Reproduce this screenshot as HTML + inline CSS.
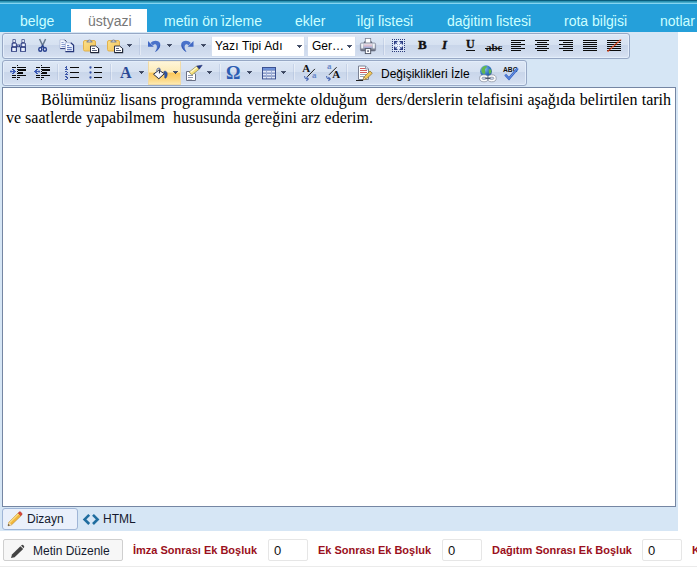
<!DOCTYPE html>
<html><head><meta charset="utf-8">
<style>
html,body{margin:0;padding:0;}
body{width:697px;height:568px;overflow:hidden;background:#fff;position:relative;font-family:"Liberation Sans",sans-serif;}
.abs{position:absolute;}
#top1{left:0;top:0;width:697px;height:1px;background:#095d7d;}
#top2{left:0;top:1px;width:697px;height:2px;background:linear-gradient(#2a93b4 50%,#48abca 50%);}
#top3{left:0;top:3px;width:697px;height:1px;background:#84d5f1;}
#tabs{left:0;top:4px;width:697px;height:28px;background:#25a0da;}
.cd{display:inline-block;width:0;position:relative;left:-3.5px;top:-0.8px;}
.tab{position:absolute;top:10px;height:23px;line-height:23px;font-size:14px;color:#ccffff;white-space:nowrap;}
#tabsel{left:71px;top:9px;width:76px;height:23px;background:#fff;}
#edwrap{left:0;top:32px;width:678px;height:499px;background:#d6e6f5;}
.tg{position:absolute;border:1px solid #97a8c5;border-radius:3px;background:linear-gradient(#dde7f5 0,#d6e1f1 44%,#c9d6ea 48%,#d2ddef 85%,#dae4f3 100%);box-sizing:border-box;box-shadow:inset 0 0 0 1px #e4eefb;}
.sep{position:absolute;width:1px;height:16px;background:rgba(150,168,205,.28);box-shadow:1px 0 0 rgba(255,255,255,.4);}
.dd{position:absolute;width:5px;height:1px;background:#4a556e;}
.dd::before{content:'';position:absolute;left:1px;top:1px;width:3px;height:1px;background:#3a455e;}
.dd::after{content:'';position:absolute;left:2px;top:2px;width:1px;height:1px;background:#3a455e;}
.ic{position:absolute;overflow:visible;}
.tx{position:absolute;font-size:12px;line-height:14px;color:#000;white-space:nowrap;}
#editor{left:2px;top:87px;width:674px;height:420px;box-sizing:border-box;border:1px solid #7586a3;background:#fff;}
#edtext{position:absolute;left:3px;top:3px;width:665px;font-family:"Liberation Serif",serif;font-size:16px;line-height:18px;color:#000;text-align:justify;}
.lbl{position:absolute;top:544px;font-size:11px;font-weight:bold;color:#9a1020;line-height:13px;white-space:nowrap;}
.inp{position:absolute;top:539px;width:40px;height:22px;box-sizing:border-box;border:1px solid #e6e6e6;border-radius:2px;background:#fff;font-size:13px;line-height:22px;padding-left:5px;color:#111;}
</style></head><body>
<div class="abs" id="top1"></div><div class="abs" id="top2"></div><div class="abs" id="top3"></div>
<div class="abs" id="tabs"></div>
<div class="abs" id="tabsel"></div>
<div class="tab" style="left:20px">belge</div>
<div class="tab" style="left:88px;color:#777">üstyazi</div>
<div class="tab" style="left:164px">meti<span class="cd">&#775;</span>n ön i<span class="cd">&#775;</span>zleme</div>
<div class="tab" style="left:295px">ekler</div>
<div class="tab" style="left:357px">i<span class="cd">&#775;</span>lgi<span class="cd">&#775;</span> li<span class="cd">&#775;</span>stesi<span class="cd">&#775;</span></div>
<div class="tab" style="left:447px">dağitim li<span class="cd">&#775;</span>stesi<span class="cd">&#775;</span></div>
<div class="tab" style="left:564px">rota bi<span class="cd">&#775;</span>lgi<span class="cd">&#775;</span>si<span class="cd">&#775;</span></div>
<div class="tab" style="left:660px">notlar</div>
<div class="abs" id="edwrap"></div>
<div class="tg" style="left:2px;top:33px;width:628px;height:26px;"></div>
<div class="tg" style="left:2px;top:60px;width:525px;height:26px;"></div>
<!--ROW1S-->
<!-- binoculars -->
<svg class="ic" style="left:11px;top:39px" width="16" height="13">
<defs><linearGradient id="bng" x1="0" y1="0" x2="1" y2="0"><stop offset="0" stop-color="#8ea0d8"/><stop offset=".45" stop-color="#ffffff"/><stop offset="1" stop-color="#b9c6ea"/></linearGradient>
<g id="bar"><path d="M1.6,0.2 H4.6 V3.4 L5.8,4.6 V8 L6,8.4 V12.8 H0 V8.4 L0.6,7.6 V4.6 L1.6,3.4 Z" fill="#27367a"/><rect x="2.3" y="0.9" width="1.6" height="2.3" fill="#f4f7ff"/><rect x="1.5" y="4.6" width="3.5" height="2.6" fill="url(#bng)"/><rect x="0.9" y="8.8" width="4.2" height="3.2" fill="url(#bng)"/></g></defs>
<use href="#bar"/><use href="#bar" x="9"/><rect x="5.6" y="5.6" width="3.6" height="2.6" fill="#27367a"/><rect x="6.4" y="6.2" width="1.8" height="1.2" fill="#aab8e2"/>
</svg>
<!-- scissors -->
<svg class="ic" style="left:38px;top:39px" width="10" height="13">
<path d="M1.6,0 L5.6,8.6 M7.6,0 L3.6,8.6" stroke="#67798e" stroke-width="1.5" fill="none"/>
<ellipse cx="2.3" cy="10.4" rx="1.5" ry="1.8" fill="#f4f6ff" stroke="#27408f" stroke-width="1.5"/>
<ellipse cx="6.9" cy="10.4" rx="1.5" ry="1.8" fill="#f4f6ff" stroke="#27408f" stroke-width="1.5"/>
<path d="M3.2,8.8 L4.6,6.6 L6,8.8" stroke="#27408f" stroke-width="1.4" fill="none"/>
</svg>
<!-- copy -->
<svg class="ic" style="left:59px;top:39px" width="16" height="14">
<defs><linearGradient id="cpg" x1="0" y1="0" x2="1" y2="0"><stop offset="0" stop-color="#ffffff"/><stop offset="1" stop-color="#dfe8fb"/></linearGradient></defs>
<path d="M1,0.8 H5.6 L7.4,2.6 V9.4 H1 Z" fill="url(#cpg)" stroke="#9aa7cf" stroke-width=".6"/>
<path d="M1.2,9.6 H7.4" stroke="#2a3a7c" stroke-width="1"/>
<path d="M5.6,0.8 L7.4,2.6" stroke="#2a3050" stroke-width="1"/>
<g fill="#7f93c9"><rect x="2.4" y="3" width="2.2" height=".9"/><rect x="2.4" y="5" width="4" height=".9"/><rect x="2.4" y="7" width="4" height=".9"/></g>
<path d="M6.4,3.8 H11.8 L14.4,6.2 V12.6 H6.4 Z" fill="url(#cpg)" stroke="#8f9dc8" stroke-width=".6"/>
<path d="M6.4,12.7 H14.6 V6.2 L11.8,3.8" stroke="#27377a" stroke-width="1.2" fill="none"/>
<g fill="#4a65b4"><rect x="8" y="6.2" width="2.2" height=".9"/><rect x="8" y="8.2" width="4.8" height=".9"/><rect x="8" y="10.2" width="4.8" height="1"/></g>
</svg>
<!-- paste -->
<svg class="ic" style="left:83px;top:39px" width="16" height="14">
<defs><linearGradient id="pgd" x1="0" y1="0" x2="1" y2="1"><stop offset="0" stop-color="#fbe08a"/><stop offset="1" stop-color="#f3c45a"/></linearGradient><g id="pst"><rect x="0.5" y="1.5" width="12" height="10.5" rx="1.5" fill="url(#pgd)" stroke="#e2b24e"/><path d="M3.6,3.6 V2.4 Q6.5,-1.6 9.4,2.4 V3.6 Z" fill="#858993"/><path d="M5.2,2.6 Q6.5,0.6 7.8,2.6 Z" fill="#f4f5f8"/><path d="M7.5,7 H12.6 L15.5,9.4 V13.5 H7.5 Z" fill="#fff" stroke="#2f3547" stroke-width="1"/><path d="M7.5,13.6 H15.6 V9.4" stroke="#1f2536" stroke-width="1.2" fill="none"/><rect x="9" y="9" width="3" height="1" fill="#59627c"/><rect x="9" y="11" width="5" height="1" fill="#59627c"/></g></defs>
<use href="#pst"/>
</svg>
<svg class="ic" style="left:107px;top:39px" width="16" height="14"><use href="#pst"/></svg>
<div class="dd" style="left:127px;top:44px"></div>
<div class="sep" style="left:139px;top:38px;height:17px"></div>
<!-- undo -->
<svg class="ic" style="left:147px;top:40px" width="14" height="12">
<defs><g id="undo"><path d="M1,1 L1,6.8 L6.8,6.8 Z" fill="#4169c4"/><path d="M3.6,3 C6,0.2 11,-0.3 13,3 C14.2,6 12,10 8,12 C10,9 10.4,6.6 9.4,5 C8.6,3.8 7,4.2 6,5.4 Z" fill="#4a72ca"/><path d="M12.4,4 C13.6,6.6 11.6,10 8,12 C10.4,10 12,7 12.4,4 Z" fill="#3558b0"/></g></defs>
<use href="#undo"/>
</svg>
<div class="dd" style="left:167px;top:44px"></div>
<svg class="ic" style="left:181px;top:40px" width="14" height="12"><use href="#undo" transform="translate(13.5,0) scale(-1,1)"/></svg>
<div class="dd" style="left:201px;top:44px"></div>
<!-- dropdowns -->
<div class="abs" style="left:211px;top:36px;width:94px;height:21px;background:#fff;box-sizing:border-box;border:1px solid #d3deef;border-top-color:#e4ebf6;"></div>
<div class="tx" style="left:215px;top:39px;letter-spacing:.14px">Yazı Tipi Adı</div>
<div class="dd" style="left:297px;top:45px"></div>
<div class="abs" style="left:307px;top:36px;width:49px;height:21px;background:#fff;box-sizing:border-box;border:1px solid #d3deef;border-top-color:#e4ebf6;"></div>
<div class="tx" style="left:312px;top:39px;">Ger…</div>
<div class="dd" style="left:347px;top:45px"></div>
<!-- printer -->
<svg class="ic" style="left:360px;top:38px" width="16" height="16">
<defs><linearGradient id="prg" x1="0" y1="0" x2="0" y2="1"><stop offset="0" stop-color="#d4d8e2"/><stop offset=".55" stop-color="#a2a8b8"/><stop offset="1" stop-color="#5c6274"/></linearGradient>
<linearGradient id="prp" x1="0" y1="0" x2="0" y2="1"><stop offset="0" stop-color="#e6e0ea"/><stop offset=".5" stop-color="#d9b9cb"/><stop offset="1" stop-color="#9fb1e2"/></linearGradient></defs>
<path d="M3.2,5.4 L4.8,3 H11.2 L12.8,5.4 Z" fill="#5b6170"/>
<rect x="5.3" y="0.4" width="5.4" height="4.8" fill="#fff" stroke="#7d8496" stroke-width=".8"/>
<rect x="0.4" y="5" width="15.2" height="8" rx="1.3" fill="url(#prg)" stroke="#6a7184" stroke-width=".6"/>
<rect x="1.3" y="5.8" width="1.9" height="4.6" fill="#f4f6fa" opacity=".9"/><rect x="12.8" y="5.8" width="1.9" height="4.6" fill="#f4f6fa" opacity=".9"/>
<rect x="3.9" y="5.8" width="8.2" height="4" fill="url(#prp)"/>
<rect x="5.3" y="10.6" width="5.4" height="5" fill="#fff" stroke="#4a5162" stroke-width=".9"/>
<rect x="7.3" y="12.3" width="1.5" height="1.5" fill="#3a4156"/>
</svg>
<div class="sep" style="left:383px;top:38px;height:17px"></div>
<!-- fullscreen -->
<svg class="ic" style="left:392px;top:39px" width="13" height="13">
<rect x="1" y="1" width="11" height="11" fill="#dde7f8"/><rect x="4" y="4" width="5" height="5" fill="#eef3fc"/>
<g fill="#2c3b7c" shape-rendering="crispEdges"><rect x="0" y="0" width="1" height="1"/><rect x="0" y="12" width="1" height="1"/><rect x="2" y="0" width="1" height="1"/><rect x="2" y="12" width="1" height="1"/><rect x="0" y="2" width="1" height="1"/><rect x="12" y="2" width="1" height="1"/><rect x="4" y="0" width="1" height="1"/><rect x="4" y="12" width="1" height="1"/><rect x="0" y="4" width="1" height="1"/><rect x="12" y="4" width="1" height="1"/><rect x="6" y="0" width="1" height="1"/><rect x="6" y="12" width="1" height="1"/><rect x="0" y="6" width="1" height="1"/><rect x="12" y="6" width="1" height="1"/><rect x="8" y="0" width="1" height="1"/><rect x="8" y="12" width="1" height="1"/><rect x="0" y="8" width="1" height="1"/><rect x="12" y="8" width="1" height="1"/><rect x="10" y="0" width="1" height="1"/><rect x="10" y="12" width="1" height="1"/><rect x="0" y="10" width="1" height="1"/><rect x="12" y="10" width="1" height="1"/><rect x="12" y="0" width="1" height="1"/><rect x="12" y="12" width="1" height="1"/></g>
<g fill="#2a3a80"><path d="M2,2 H6 L2,6 Z"/><path d="M11,2 H7 L11,6 Z"/><path d="M2,11 H6 L2,7 Z"/><path d="M11,11 H7 L11,7 Z"/></g>
<path d="M3.5,3.5 L5.6,5.6 M9.5,3.5 L7.4,5.6 M3.5,9.5 L5.6,7.4 M9.5,9.5 L7.4,7.4" stroke="#5a6fae" stroke-width="1"/>
</svg>
<!-- B I U abc -->
<div class="abs" style="left:418px;top:37px;font:bold 13px/16px 'Liberation Serif',serif;color:#111;-webkit-text-stroke:.4px #111;">B</div>
<div class="abs" style="left:442px;top:37px;font:italic bold 13px/16px 'Liberation Serif',serif;color:#111;-webkit-text-stroke:.4px #111;">I</div>
<div class="abs" style="left:466px;top:36px;font:bold 12px/16px 'Liberation Serif',serif;color:#111;-webkit-text-stroke:.3px #111;">U</div>
<div class="abs" style="left:466px;top:50px;width:9px;height:1px;background:#111;"></div>
<div class="abs" style="left:486px;top:40px;font:bold 11px/14px 'Liberation Serif',serif;color:#111;">abc</div>
<div class="abs" style="left:485px;top:48px;width:17px;height:1px;background:#111;"></div>
<!-- align -->
<svg class="ic" style="left:511px;top:40px" width="14" height="11" shape-rendering="crispEdges" fill="#0a0a0a"><rect x="0" y="0" width="14" height="1"/><rect x="0" y="2" width="10" height="1"/><rect x="0" y="4" width="14" height="1"/><rect x="0" y="6" width="10" height="1"/><rect x="0" y="8" width="14" height="1"/><rect x="0" y="10" width="10" height="1"/></svg>
<svg class="ic" style="left:535px;top:40px" width="14" height="11" shape-rendering="crispEdges" fill="#0a0a0a"><rect x="0" y="0" width="14" height="1"/><rect x="2" y="2" width="10" height="1"/><rect x="0" y="4" width="14" height="1"/><rect x="2" y="6" width="10" height="1"/><rect x="0" y="8" width="14" height="1"/><rect x="2" y="10" width="10" height="1"/></svg>
<svg class="ic" style="left:559px;top:40px" width="14" height="11" shape-rendering="crispEdges" fill="#0a0a0a"><rect x="0" y="0" width="14" height="1"/><rect x="4" y="2" width="10" height="1"/><rect x="0" y="4" width="14" height="1"/><rect x="4" y="6" width="10" height="1"/><rect x="0" y="8" width="14" height="1"/><rect x="4" y="10" width="10" height="1"/></svg>
<svg class="ic" style="left:583px;top:40px" width="14" height="11" shape-rendering="crispEdges" fill="#0a0a0a"><rect x="0" y="0" width="14" height="1"/><rect x="0" y="2" width="14" height="1"/><rect x="0" y="4" width="14" height="1"/><rect x="0" y="6" width="14" height="1"/><rect x="0" y="8" width="14" height="1"/><rect x="0" y="10" width="14" height="1"/></svg>
<svg class="ic" style="left:607px;top:39px" width="15" height="13"><g shape-rendering="crispEdges" fill="#0a0a0a"><rect x="0" y="1" width="14" height="1"/><rect x="0" y="3" width="14" height="1"/><rect x="0" y="5" width="14" height="1"/><rect x="0" y="7" width="14" height="1"/><rect x="0" y="9" width="14" height="1"/><rect x="0" y="11" width="14" height="1"/></g><path d="M0.5,12.5 L14,0.5" stroke="#e8491d" stroke-width="1.6" stroke-dasharray="1.6,0.6"/></svg>
<!--ROW1E-->
<!--ROW2S-->
<!-- indent -->
<svg class="ic" style="left:10px;top:65px" width="17" height="15" shape-rendering="crispEdges">
<defs><g id="ind" fill="#0a0a0a"><rect x="7" y="0" width="1" height="1"/><rect x="7" y="2" width="1" height="1"/><rect x="7" y="4" width="1" height="1"/><rect x="7" y="6" width="1" height="1"/><rect x="7" y="8" width="1" height="1"/><rect x="7" y="10" width="1" height="1"/><rect x="7" y="12" width="1" height="1"/><rect x="7" y="14" width="1" height="1"/>
<rect x="2" y="2" width="4" height="1"/><rect x="8" y="2" width="8" height="1"/><rect x="8" y="4" width="8" height="2"/><rect x="8" y="7" width="5" height="2"/><rect x="2" y="10" width="4" height="1"/><rect x="8" y="10" width="8" height="1"/><rect x="2" y="12" width="4" height="1"/><rect x="8" y="12" width="2" height="1"/></g></defs>
<use href="#ind"/>
<g fill="#3d5bb5"><rect x="0" y="6" width="6" height="1"/><rect x="3" y="5" width="2" height="3"/><rect x="2" y="4" width="2" height="1"/><rect x="2" y="8" width="2" height="1"/><rect x="0" y="5" width="2" height="1" opacity=".35"/><rect x="0" y="7" width="2" height="1" opacity=".35"/></g>
</svg>
<svg class="ic" style="left:34px;top:65px" width="17" height="15" shape-rendering="crispEdges">
<use href="#ind"/>
<g fill="#3d5bb5"><rect x="0" y="6" width="6" height="1"/><rect x="1" y="5" width="2" height="3"/><rect x="2" y="4" width="2" height="1"/><rect x="2" y="8" width="2" height="1"/><rect x="4" y="5" width="2" height="1" opacity=".35"/><rect x="4" y="7" width="2" height="1" opacity=".35"/></g>
</svg>
<div class="sep" style="left:57px;top:64px"></div>
<!-- numbered -->
<svg class="ic" style="left:64px;top:65px" width="16" height="15">
<g shape-rendering="crispEdges" fill="#0a0a0a"><rect x="6" y="2" width="9" height="1"/><rect x="6" y="7" width="9" height="1"/><rect x="6" y="12" width="9" height="1"/></g>
<g shape-rendering="crispEdges" fill="#3d57a8"><rect x="2" y="1" width="1" height="1"/><rect x="1" y="2" width="1" height="1"/><rect x="2" y="2" width="1" height="1"/><rect x="2" y="3" width="1" height="1"/><rect x="1" y="4" width="1" height="1"/><rect x="2" y="4" width="1" height="1"/><rect x="3" y="4" width="1" height="1"/><rect x="1" y="6" width="1" height="1"/><rect x="2" y="6" width="1" height="1"/><rect x="3" y="7" width="1" height="1"/><rect x="2" y="8" width="1" height="1"/><rect x="1" y="9" width="1" height="1"/><rect x="2" y="9" width="1" height="1"/><rect x="3" y="9" width="1" height="1"/><rect x="1" y="11" width="1" height="1"/><rect x="2" y="11" width="1" height="1"/><rect x="2" y="12" width="1" height="1"/><rect x="3" y="12" width="1" height="1"/><rect x="3" y="13" width="1" height="1"/><rect x="1" y="14" width="1" height="1"/><rect x="2" y="14" width="1" height="1"/></g>
</svg>
<!-- bullets -->
<svg class="ic" style="left:89px;top:65px" width="14" height="15">
<g shape-rendering="crispEdges" fill="#0a0a0a"><rect x="5" y="2" width="8" height="1"/><rect x="5" y="7" width="8" height="1"/><rect x="5" y="12" width="8" height="1"/></g>
<g fill="#3451a8"><circle cx="1.5" cy="2.5" r="1.15"/><circle cx="1.5" cy="7.5" r="1.15"/><circle cx="1.5" cy="12.5" r="1.15"/></g>
</svg>
<div class="sep" style="left:110px;top:64px"></div>
<!-- A -->
<div class="abs" style="left:120px;top:64px;font:bold 16px/18px 'Liberation Serif',serif;color:#2b4a96;">A</div>
<div class="dd" style="left:139px;top:71px"></div>
<!-- highlight -->
<div class="abs" style="left:148px;top:61px;width:33px;height:24px;box-sizing:border-box;border:1px solid #f0dba8;border-top-color:#f6ecd0;background:linear-gradient(#fef5d8 0,#fdebb8 46%,#fbc75a 50%,#fcd680 78%,#feeab0 100%);"></div>
<svg class="ic" style="left:153px;top:65px" width="16" height="15">
<defs><linearGradient id="bkg" x1="0" y1="0" x2="1" y2="1"><stop offset="0" stop-color="#ffffff"/><stop offset=".6" stop-color="#f4f6fc"/><stop offset="1" stop-color="#c3cce2"/></linearGradient></defs>
<path d="M10.8,6.6 C12.6,5.4 14.6,6.8 14.2,9.8 C14,11.8 13.2,13.4 12,13.2 C11.2,12.2 12,10.8 11.6,9.4 Z" fill="#2c55a8" stroke="#1f3f86" stroke-width=".5"/>
<path d="M0.5,9.2 L5.8,5.2 L11.4,8.6 L5.8,13.8 Z" fill="url(#bkg)" stroke="#23283c" stroke-width="1"/>
<path d="M3.8,7.4 C3.2,2.2 7.6,1.6 7.4,6.6" stroke="#7484ac" stroke-width="1.1" fill="none"/>
<rect x="5.9" y="4.4" width="1.1" height="4" fill="#343a52"/>
</svg>
<div class="dd" style="left:173px;top:71px"></div>
<!-- brush -->
<svg class="ic" style="left:186px;top:65px" width="17" height="16">
<path d="M0.5,6.5 H6.5 L9.5,9 V15.5 H0.5 Z" fill="#fff" stroke="#6a7186" stroke-width="1"/>
<g shape-rendering="crispEdges" fill="#8d96ad"><rect x="2" y="10" width="5" height="1"/><rect x="2" y="12" width="5" height="1"/><rect x="2" y="14" width="4" height="1" opacity=".5"/></g>
<path d="M3.2,7 L10.8,1 L13.3,4.1 L5.8,10.1 Z" fill="#f4de78" stroke="#86824f" stroke-width=".7"/>
<path d="M4.6,7.3 L11,2.3" stroke="#fffad2" stroke-width="1.3"/>
<path d="M10.8,1 L16.2,0.2 L13.3,4.1 Z" fill="#243a8c" stroke="#1a2a6a" stroke-width=".5"/>
</svg>
<div class="dd" style="left:207px;top:71px"></div>
<div class="sep" style="left:219px;top:64px"></div>
<!-- omega -->
<div class="abs" style="left:226px;top:63px;font:bold 18px/20px 'Liberation Serif',serif;color:#2c5db3;">Ω</div>
<div class="dd" style="left:247px;top:71px"></div>
<!-- table -->
<svg class="ic" style="left:262px;top:67px" width="14" height="12.4" viewBox="0 0 14 13" preserveAspectRatio="none">
<rect x="0" y="0" width="14" height="13" fill="#3a4f8f"/>
<rect x="1" y="1" width="12" height="2" fill="#6e92dc"/>
<g fill="#e4eaf8"><rect x="1" y="4" width="3" height="2"/><rect x="5" y="4" width="4" height="2"/><rect x="10" y="4" width="3" height="2"/><rect x="1" y="7" width="3" height="2"/><rect x="5" y="7" width="4" height="2"/><rect x="10" y="7" width="3" height="2"/><rect x="1" y="10" width="3" height="2"/><rect x="5" y="10" width="4" height="2"/><rect x="10" y="10" width="3" height="2"/></g>
<g fill="#9fb0d8"><rect x="4" y="4" width="1" height="8"/><rect x="9" y="4" width="1" height="8"/><rect x="1" y="6" width="12" height="1"/><rect x="1" y="9" width="12" height="1"/><rect x="1" y="3" width="12" height="1"/></g>
</svg>
<div class="dd" style="left:281px;top:71px"></div>
<div class="sep" style="left:293px;top:64px"></div>
<!-- A/a -->
<svg class="ic" style="left:302px;top:64px" width="15" height="18">
<text x="0.3" y="7.7" font-family="Liberation Serif, serif" font-weight="bold" font-size="11" fill="#111">A</text>
<path d="M12.9,4.9 L5.3,12.8" stroke="#1a1a1a" stroke-width="1"/>
<text x="10" y="13.5" font-family="Liberation Serif, serif" font-weight="bold" font-size="9" fill="#6a8aca">a</text>
<path d="M2.6,12 C2.6,14.6 3.4,15 6,15 M4.4,13.2 L6.3,15 L4.4,16.8" stroke="#4a68b4" stroke-width="1.1" fill="none"/>
</svg>
<svg class="ic" style="left:326px;top:64px" width="15" height="18">
<text x="1" y="5.4" font-family="Liberation Serif, serif" font-weight="bold" font-size="9" fill="#6a8aca">a</text>
<path d="M10.6,3.2 L3,10.8" stroke="#1a1a1a" stroke-width="1"/>
<text x="6.3" y="13.8" font-family="Liberation Serif, serif" font-weight="bold" font-size="11" fill="#111">A</text>
<path d="M0.6,12 C0.6,14.6 1.4,15 4,15 M2.4,13.2 L4.3,15 L2.4,16.8" stroke="#4a68b4" stroke-width="1.1" fill="none"/>
</svg>
<div class="sep" style="left:346px;top:64px"></div>
<!-- track changes -->
<svg class="ic" style="left:356px;top:65px" width="17" height="17">
<path d="M2.5,1 H9.5 L12.5,4 V14.5 H2.5 Z" fill="#fff" stroke="#7b8294" stroke-width="1"/>
<path d="M9.5,1 V4 H12.5" fill="#d9e2f4" stroke="#7b8294" stroke-width=".8"/>
<g shape-rendering="crispEdges"><rect x="4" y="3" width="5" height="1" fill="#d25b5b"/><rect x="4" y="5" width="7" height="1" fill="#d25b5b"/><rect x="4" y="7" width="7" height="1" fill="#d25b5b"/><rect x="4" y="9" width="6" height="1" fill="#9aa3b8"/><rect x="4" y="11" width="4" height="1" fill="#9aa3b8"/><rect x="0" y="15" width="7" height="1" fill="#222"/></g>
<path d="M7,14.8 L8,12 L14,6 L16.3,8.3 L10.2,14.2 Z" fill="#f1c75b" stroke="#8a6a2a" stroke-width=".7"/>
<path d="M7,14.8 L8,12 L9.8,13.9 Z" fill="#f6e6c4" stroke="#8a6a2a" stroke-width=".5"/>
</svg>
<div class="tx" style="left:381px;top:67px;">Değişiklikleri İzle</div>
<!-- globe link -->
<svg class="ic" style="left:479px;top:65px" width="18" height="17">
<defs><radialGradient id="gl" cx=".35" cy=".3" r=".8"><stop offset="0" stop-color="#8fc3f0"/><stop offset=".6" stop-color="#2f74c0"/><stop offset="1" stop-color="#1c4d94"/></radialGradient></defs>
<circle cx="7" cy="6.2" r="5.9" fill="url(#gl)"/>
<path d="M3.2,2.6 C4.6,1 6.8,0.6 8,1.4 C7.6,2.8 6.4,3.2 6,4.6 C5.6,6 6.8,6.8 6.2,8.2 C5.4,9.6 3.6,8.8 2.8,7.2 C2.2,5.6 2.4,3.8 3.2,2.6 Z" fill="#62b84e"/>
<path d="M10,4.2 C11.2,3.8 12.4,4.8 12.5,6.4 C12.2,8 11.2,9 10.2,8.8 C9.6,7.6 9.6,5.6 10,4.2 Z" fill="#62b84e"/>
<ellipse cx="5" cy="13.3" rx="3.3" ry="2.4" fill="none" stroke="#fdfdfd" stroke-width="2.4"/>
<ellipse cx="12.8" cy="13.3" rx="3.3" ry="2.4" fill="none" stroke="#fdfdfd" stroke-width="2.4"/>
<ellipse cx="5" cy="13.3" rx="4.4" ry="3.5" fill="none" stroke="#7d869a" stroke-width=".7"/>
<ellipse cx="12.8" cy="13.3" rx="4.4" ry="3.5" fill="none" stroke="#7d869a" stroke-width=".7"/>
<ellipse cx="5" cy="13.3" rx="2.1" ry="1.2" fill="#c6cfe2" stroke="#7d869a" stroke-width=".6"/>
<ellipse cx="12.8" cy="13.3" rx="2.1" ry="1.2" fill="#c6cfe2" stroke="#7d869a" stroke-width=".6"/>
<rect x="6.4" y="12.5" width="5" height="1.6" fill="#4f586c"/>
</svg>
<!-- spell -->
<svg class="ic" style="left:502px;top:64px" width="18" height="17">
<text x="1" y="7.6" font-family="Liberation Sans, sans-serif" font-weight="bold" font-size="7.5" fill="#111" textLength="14.5" lengthAdjust="spacingAndGlyphs">ABC</text>
<path d="M3.2,10.6 L7,14.6 L15.8,4.2" stroke="#3563c6" stroke-width="2.4" fill="none"/>
<path d="M3.2,10.6 L7,14.6 L15.8,4.2" stroke="#7ea4ea" stroke-width=".8" fill="none"/>
</svg>
<!--ROW2E-->
<div class="abs" id="editor"><div id="edtext"><span style="display:inline-block;width:35px"></span>Bölümünüz lisans programında vermekte olduğum&nbsp; ders/derslerin telafisini aşağıda belirtilen tarih ve saatlerde yapabilmem&nbsp; hususunda gereğini arz ederim.</div></div>
<!--BOTS-->
<div class="abs" style="left:2px;top:508px;width:76px;height:22px;box-sizing:border-box;border:1px solid #9fb5d6;border-radius:3px;background:#eaf0fb;"></div>
<svg class="ic" style="left:7px;top:511px" width="16" height="16">
<path d="M1,14.8 L2,11.2 L11.2,2 L14,4.8 L4.6,13.8 Z" fill="#f2b83c" stroke="#b8801e" stroke-width=".6"/>
<path d="M2.6,11.6 L11.8,2.6" stroke="#fbe08a" stroke-width="1.2"/>
<path d="M11.2,2 L12.6,0.8 C13.4,0.4 15.4,2.4 15,3.4 L14,4.8 Z" fill="#d9463a" stroke="#a8281f" stroke-width=".5"/>
<path d="M1,14.8 L2,11.2 L4.6,13.8 Z" fill="#f3dfb8"/>
<path d="M1,14.8 L1.5,13 L2.8,14.3 Z" fill="#222"/>
</svg>
<div class="tx" style="left:27px;top:512px;color:#141a2e;">Dizayn</div>
<svg class="ic" style="left:83px;top:514px" width="17" height="11">
<path d="M6.2,0.8 L1.6,5.4 L6.2,10 M10,0.8 L14.6,5.4 L10,10" stroke="#1f6d9f" stroke-width="2.6" fill="none" stroke-linejoin="miter"/>
</svg>
<div class="tx" style="left:103px;top:512px;color:#141a2e;">HTML</div>
<!-- bottom row -->
<div class="abs" style="left:3px;top:539px;width:120px;height:22px;box-sizing:border-box;border:1px solid #cfcfcf;border-radius:2px;background:#f7f7f7;"></div>
<svg class="ic" style="left:10px;top:544px" width="16" height="15">
<path d="M1,14 L2,10.6 L10.4,2.2 L13.2,5 L4.6,13.2 Z" fill="#444"/>
<path d="M11.2,1.4 C12,0.6 12.8,0.6 13.6,1.4 C14.4,2.2 14.4,3 13.8,3.8 L13.6,4.2 L10.9,1.6 Z" fill="#444"/>
</svg>
<div class="tx" style="left:33px;top:544px;color:#141a2e;">Metin Düzenle</div>
<div class="lbl" style="left:133px;">İmza Sonrası Ek Boşluk</div>
<div class="inp" style="left:268px;">0</div>
<div class="lbl" style="left:318px;">Ek Sonrası Ek Boşluk</div>
<div class="inp" style="left:442px;">0</div>
<div class="lbl" style="left:492px;">Dağıtım Sonrası Ek Boşluk</div>
<div class="inp" style="left:642px;">0</div>
<div class="lbl" style="left:692px;">Kağıt</div>
<div class="abs" style="left:0;top:566px;width:697px;height:1px;background:#ebebeb;"></div>
<!--BOTE-->
</body></html>
